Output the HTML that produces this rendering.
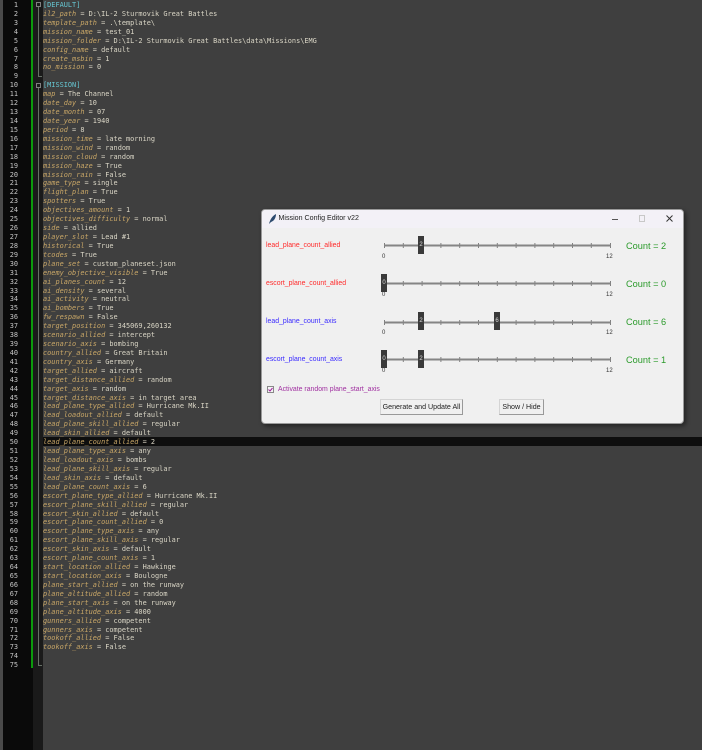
<!DOCTYPE html>
<html><head><meta charset="utf-8"><style>
html,body{margin:0;padding:0;width:702px;height:750px;overflow:hidden;background:#3f3f3f}
*{box-sizing:border-box}
.a{position:absolute}
#g0{left:0;top:0;width:3px;height:750px;background:#4a4a4a}
#g1{left:3px;top:0;width:30px;height:750px;background:#0a0a0a}
#g2{left:33px;top:0;width:10px;height:750px;background:#1a1a1a}
#green{left:31px;top:0;width:2px;height:668px;background:#0c9a0c}
#hl{left:43px;top:437px;width:659px;height:9px;background:#0e0e0e}
pre{margin:0;position:absolute;font-family:"DejaVu Sans Mono","Liberation Mono",monospace;font-size:6.9px;line-height:8.92px;filter:blur(.3px)}
#nums{left:3px;top:1px;width:15px;text-align:right;color:#c4c4c4}
#code{left:43px;top:1px;color:#dad6c6}
#code i{color:#c9a767}
#code b{font-weight:normal;color:#66c6d2}
.fold{width:5px;height:5px;border:1px solid #808080;left:36px}
.fl{background:#667066;width:1px;left:38px}
#win{left:261px;top:209px;width:423px;height:215px;background:#f0f0f0;border:1px solid #9a9a9a;border-radius:4px;overflow:hidden;box-shadow:2px 2px 5px rgba(0,0,0,.45);font-family:"Liberation Sans",sans-serif;filter:blur(.3px)}
#tb{left:0;top:0;width:421px;height:18px;background:#f3f1f7;color:#222;font-size:7.1px;line-height:17px;padding-left:16.5px;white-space:nowrap}
.lab{position:absolute;left:4px;font-size:6.9px;line-height:10px;white-space:nowrap}
.cnt{position:absolute;left:364px;font-size:9.2px;line-height:12px;color:#2a9a2a;white-space:nowrap}
.th{position:absolute;width:6px;height:18px;background:#3a3a3a;color:#ddd;font-size:6px;line-height:18px;text-align:center}
.n{position:absolute;font-size:6px;line-height:8px;color:#333}
.btn{position:absolute;top:189px;height:16px;background:#f0f0f0;border:1px solid #d4d4d4;border-right-color:#999;border-bottom-color:#999;font-size:7.1px;line-height:14px;text-align:center;color:#222;white-space:nowrap}
</style></head><body>
<div class="a" id="g0"></div><div class="a" id="g1"></div><div class="a" id="g2"></div><div class="a" id="green"></div><div class="a" id="hl"></div>
<div class="a fold" style="top:2px"></div><div class="a fl" style="top:7px;height:69px"></div><div class="a" style="left:38px;top:76px;width:4px;height:1px;background:#667066"></div>
<div class="a fold" style="top:83px"></div><div class="a fl" style="top:88px;height:577px"></div><div class="a" style="left:38px;top:665px;width:4px;height:1px;background:#667066"></div>
<pre id="nums">1
2
3
4
5
6
7
8
9
10
11
12
13
14
15
16
17
18
19
20
21
22
23
24
25
26
27
28
29
30
31
32
33
34
35
36
37
38
39
40
41
42
43
44
45
46
47
48
49
50
51
52
53
54
55
56
57
58
59
60
61
62
63
64
65
66
67
68
69
70
71
72
73
74
75</pre>
<pre id="code"><b>[DEFAULT]</b>
<i>il2_path</i> = D:\IL-2 Sturmovik Great Battles
<i>template_path</i> = .\template\
<i>mission_name</i> = test_01
<i>mission_folder</i> = D:\IL-2 Sturmovik Great Battles\data\Missions\EMG
<i>config_name</i> = default
<i>create_msbin</i> = 1
<i>no_mission</i> = 0

<b>[MISSION]</b>
<i>map</i> = The Channel
<i>date_day</i> = 10
<i>date_month</i> = 07
<i>date_year</i> = 1940
<i>period</i> = 8
<i>mission_time</i> = late morning
<i>mission_wind</i> = random
<i>mission_cloud</i> = random
<i>mission_haze</i> = True
<i>mission_rain</i> = False
<i>game_type</i> = single
<i>flight_plan</i> = True
<i>spotters</i> = True
<i>objectives_amount</i> = 1
<i>objectives_difficulty</i> = normal
<i>side</i> = allied
<i>player_slot</i> = Lead #1
<i>historical</i> = True
<i>tcodes</i> = True
<i>plane_set</i> = custom_planeset.json
<i>enemy_objective_visible</i> = True
<i>ai_planes_count</i> = 12
<i>ai_density</i> = several
<i>ai_activity</i> = neutral
<i>ai_bombers</i> = True
<i>fw_respawn</i> = False
<i>target_position</i> = 345069,260132
<i>scenario_allied</i> = intercept
<i>scenario_axis</i> = bombing
<i>country_allied</i> = Great Britain
<i>country_axis</i> = Germany
<i>target_allied</i> = aircraft
<i>target_distance_allied</i> = random
<i>target_axis</i> = random
<i>target_distance_axis</i> = in target area
<i>lead_plane_type_allied</i> = Hurricane Mk.II
<i>lead_loadout_allied</i> = default
<i>lead_plane_skill_allied</i> = regular
<i>lead_skin_allied</i> = default
<i>lead_plane_count_allied</i> = 2
<i>lead_plane_type_axis</i> = any
<i>lead_loadout_axis</i> = bombs
<i>lead_plane_skill_axis</i> = regular
<i>lead_skin_axis</i> = default
<i>lead_plane_count_axis</i> = 6
<i>escort_plane_type_allied</i> = Hurricane Mk.II
<i>escort_plane_skill_allied</i> = regular
<i>escort_skin_allied</i> = default
<i>escort_plane_count_allied</i> = 0
<i>escort_plane_type_axis</i> = any
<i>escort_plane_skill_axis</i> = regular
<i>escort_skin_axis</i> = default
<i>escort_plane_count_axis</i> = 1
<i>start_location_allied</i> = Hawkinge
<i>start_location_axis</i> = Boulogne
<i>plane_start_allied</i> = on the runway
<i>plane_altitude_allied</i> = random
<i>plane_start_axis</i> = on the runway
<i>plane_altitude_axis</i> = 4000
<i>gunners_allied</i> = competent
<i>gunners_axis</i> = competent
<i>tookoff_allied</i> = False
<i>tookoff_axis</i> = False</pre>
<div class="a" id="win">
<div class="a" id="tb">Mission Config Editor v22</div>
<svg class="a" style="left:5px;top:3px" width="11" height="12" viewBox="0 0 11 12"><path d="M2 11C3 7 5 3 9 1C9 5 7 8 4 9Z" fill="#2c4a6e"/></svg>
<div class="a" style="left:350px;top:9px;width:6px;height:1px;background:#555"></div>
<div class="a" style="left:377px;top:5px;width:6px;height:7px;border:1px solid #c8c8c8"></div>
<svg class="a" style="left:404px;top:5px" width="7" height="7" viewBox="0 0 7 7"><path d="M.5 .5L6.5 6.5M6.5 .5L.5 6.5" stroke="#333" stroke-width="1"/></svg>

<div class="lab" style="top:31px;color:#ff2a2a">lead_plane_count_allied</div>
<div class="lab" style="top:69px;color:#ff2a2a">escort_plane_count_allied</div>
<div class="lab" style="top:107px;color:#3a2aff">lead_plane_count_axis</div>
<div class="lab" style="top:145px;color:#3a2aff">escort_plane_count_axis</div>

<div class="cnt" style="top:30px">Count = 2</div>
<div class="cnt" style="top:68px">Count = 0</div>
<div class="cnt" style="top:106px">Count = 6</div>
<div class="cnt" style="top:144px">Count = 1</div>

<svg class="a" style="left:118px;top:25px" width="240" height="135" viewBox="0 0 240 135">
<g stroke="#808080" stroke-width="1"><path d="M4.5 8V13M23.3 8V13M42.1 8V13M60.9 8V13M79.7 8V13M98.5 8V13M117.3 8V13M136.1 8V13M154.9 8V13M173.7 8V13M192.5 8V13M211.3 8V13M230.5 8V13"/>
<path d="M4.5 46V51M23.3 46V51M42.1 46V51M60.9 46V51M79.7 46V51M98.5 46V51M117.3 46V51M136.1 46V51M154.9 46V51M173.7 46V51M192.5 46V51M211.3 46V51M230.5 46V51"/>
<path d="M4.5 85V90M23.3 85V90M42.1 85V90M60.9 85V90M79.7 85V90M98.5 85V90M117.3 85V90M136.1 85V90M154.9 85V90M173.7 85V90M192.5 85V90M211.3 85V90M230.5 85V90"/>
<path d="M4.5 122V127M23.3 122V127M42.1 122V127M60.9 122V127M79.7 122V127M98.5 122V127M117.3 122V127M136.1 122V127M154.9 122V127M173.7 122V127M192.5 122V127M211.3 122V127M230.5 122V127"/></g>
<g fill="#858585"><rect x="4" y="9.5" width="227" height="2"/><rect x="4" y="47.5" width="227" height="2"/><rect x="4" y="86.5" width="227" height="2"/><rect x="4" y="123.5" width="227" height="2"/></g>
</svg>

<div class="th" style="left:156px;top:26px">2</div>
<div class="th" style="left:119px;top:64px">0</div>
<div class="th" style="left:156px;top:102px">2</div>
<div class="th" style="left:232px;top:102px">6</div>
<div class="th" style="left:119px;top:140px">0</div>
<div class="th" style="left:156px;top:140px">2</div>

<div class="n" style="left:120px;top:43px">0</div><div class="n" style="left:344px;top:43px">12</div>
<div class="n" style="left:120px;top:81px">0</div><div class="n" style="left:344px;top:81px">12</div>
<div class="n" style="left:120px;top:119px">0</div><div class="n" style="left:344px;top:119px">12</div>
<div class="n" style="left:120px;top:157px">0</div><div class="n" style="left:344px;top:157px">12</div>

<div class="a" style="left:5px;top:176px;width:7px;height:7px;border:1px solid #888;background:#f4f4f4"></div>
<svg class="a" style="left:6px;top:177px" width="5" height="5" viewBox="0 0 5 5"><path d="M.5 2.5L2 4L4.5 1" stroke="#a020a0" fill="none" stroke-width="1"/></svg>
<div class="lab" style="left:16px;top:175px;color:#a030a0">Activate random plane_start_axis</div>
<div class="btn" style="left:118px;width:83px">Generate and Update All</div>
<div class="btn" style="left:237px;width:45px">Show / Hide</div>
</div>
</body></html>
